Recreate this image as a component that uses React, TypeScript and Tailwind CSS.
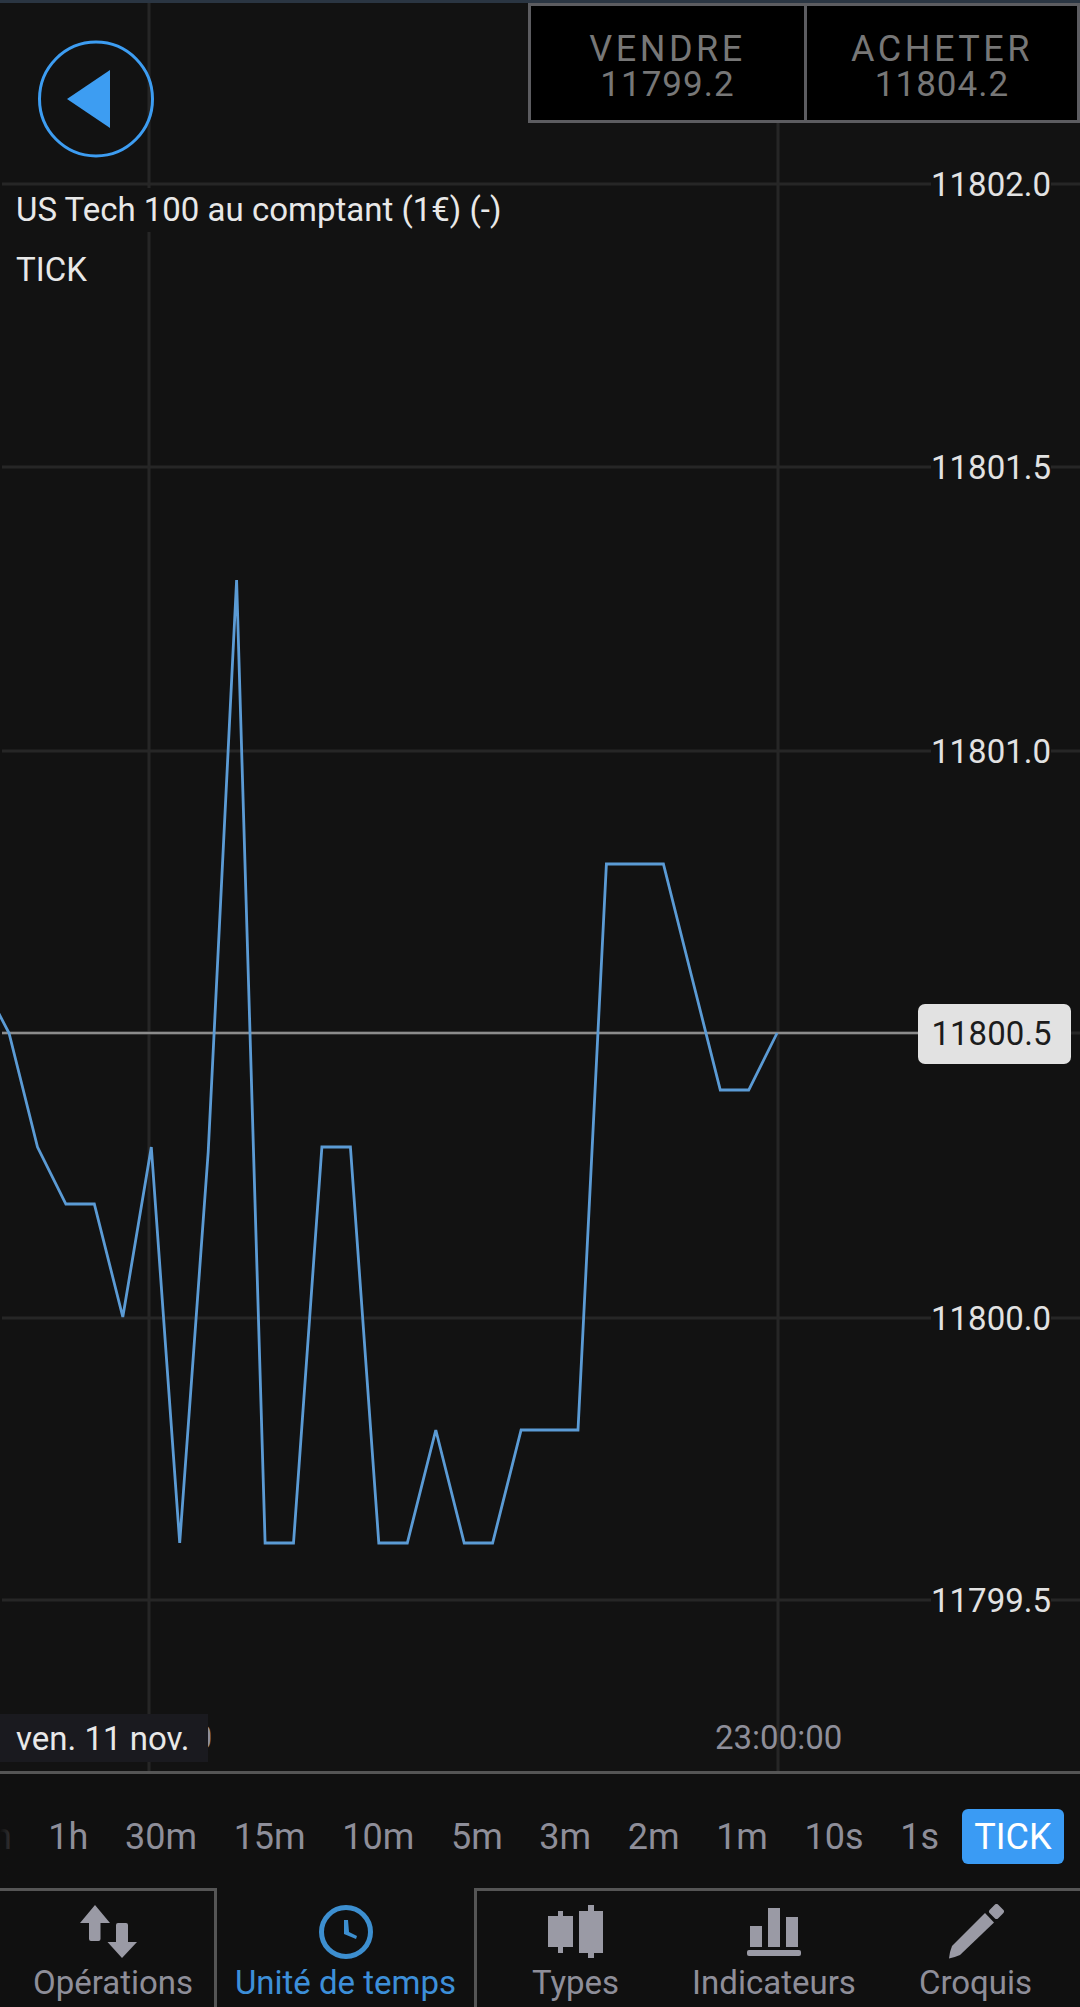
import React from "react";

const font = { fontFamily: "Roboto, sans-serif" };

// x positions step by one tick, y comes straight from the chart
const tick = [
  1147, 1204, 1204, 1317, 1147, 1543, 1152, 580, 1543, 1543, 1147, 1147, 1543, 1543, 1430,
  1543, 1543, 1430, 1430, 1430, 864, 864, 864, 977, 1090, 1090, 1033,
];
const linePoints =
  "-2,1012 9,1033 " + tick.map((y, i) => `${(9 + 28.45 * (i + 1)).toFixed(1)},${y}`).join(" ");

const gridY = [184, 467, 751, 1033, 1318, 1600];
const prices = [
  { label: "11802.0", y: 184 },
  { label: "11801.5", y: 467 },
  { label: "11801.0", y: 751 },
  { label: "11800.0", y: 1318 },
  { label: "11799.5", y: 1600 },
];
const frames = ["2h", "1h", "30m", "15m", "10m", "5m", "3m", "2m", "1m", "10s", "1s"];

const QuoteButton = ({ label, price, className }: { label: string; price: string; className: string }) => (
  <div className={`flex flex-col items-center justify-center bg-black pt-[7px] text-[#777] ${className}`}>
    <span className="text-[36px] leading-[35px] tracking-[3.5px]">{label}</span>
    <span className="text-[35px] leading-[35px] tracking-[1px]">{price}</span>
  </div>
);

const TabLabel = ({ children, active }: { children: string; active?: boolean }) => (
  <span className={`mt-[3px] text-[33px] leading-[42px] ${active ? "text-[#3d8fd9]" : "text-[#8e8e99]"}`}>
    {children}
  </span>
);

export default function App() {
  return (
    <div className="flex h-[2007px] w-[1080px] flex-col overflow-hidden bg-[#121212]" style={font}>
      <div className="h-[3px] bg-[#2a3542]" />

      {/* chart area: labels and lines are placed on the chart canvas */}
      <div className="relative h-[1768px]">
        <svg className="absolute left-0 top-[-3px]" width="1080" height="1771">
          {gridY.map((y) => (
            <line key={y} x1="2" x2="1080" y1={y} y2={y} stroke="#262626" strokeWidth="3" />
          ))}
          <line x1="149" x2="149" y1="3" y2="1771" stroke="#262626" strokeWidth="3" />
          <line x1="778" x2="778" y1="3" y2="1771" stroke="#262626" strokeWidth="3" />
          <line x1="2" x2="918" y1="1033" y2="1033" stroke="#8c8c8c" strokeWidth="2.5" />
          <polyline points={linePoints} fill="none" stroke="#5b9bd5" strokeWidth="2.8" strokeLinejoin="miter" />
        </svg>

        {prices.map((p) => (
          <span
            key={p.label}
            className="absolute right-[29px] bg-[#121212] text-[33px] leading-[40px] text-[#e2e2e2]"
            style={{ top: p.y - 22 }}
          >
            {p.label}
          </span>
        ))}
        <span className="absolute left-[918px] top-[1001px] flex h-[60px] w-[153px] items-center justify-center rounded-[7px] bg-[#e2e2e2] pr-[6px] text-[33px] text-[#1c1c1c]">
          11800.5
        </span>

        <div className="absolute left-[528px] top-0 flex h-[120px] w-[552px] border-[3px] border-[#5c5c60]">
          <QuoteButton label="VENDRE" price="11799.2" className="w-[276px] border-r-[3px] border-[#5c5c60]" />
          <QuoteButton label="ACHETER" price="11804.2" className="flex-1" />
        </div>

        <svg className="absolute left-[36px] top-[35px]" width="120" height="122" viewBox="36 38 120 122">
          <ellipse cx="96" cy="99" rx="56.5" ry="57" fill="none" stroke="#3d9df2" strokeWidth="3" />
          <path d="M67 99 L110 70 V128 Z" fill="#3d9df2" />
        </svg>

        <span className="absolute left-[16px] top-[185px] bg-[#121212] text-[33px] leading-[44px] text-[#e8e8e8]">
          US Tech 100 au comptant (1€) (-)
        </span>
        <span className="absolute left-[16px] top-[245px] text-[33px] leading-[44px] text-[#e8e8e8]">TICK</span>

        <span className="absolute left-[85px] top-[1715px] text-[33px] leading-[40px] text-[#8e8e99]">22:00:00</span>
        <span className="absolute left-[715px] top-[1715px] text-[33px] leading-[40px] text-[#8e8e99]">23:00:00</span>
        <span className="absolute left-0 top-[1711px] flex h-[48px] w-[208px] items-center bg-[#1a1a1f] pl-[16px] pt-[2px] text-[33px] text-[#e8e8e8]">
          ven. 11 nov.
        </span>
      </div>

      {/* time frames */}
      <div className="relative flex h-[117px] items-center justify-end gap-[36.6px] overflow-hidden border-t-[3px] border-[#555] bg-[#101010] pr-[16px] pt-[11px] text-[36px] text-[#8e8e99]">
        {frames.map((f) => (
          <span key={f} className="shrink-0">
            {f}
          </span>
        ))}
        <span className="-ml-[13.6px] flex h-[55px] w-[102px] shrink-0 items-center justify-center rounded-[6px] bg-[#3a9bf4] text-white">
          TICK
        </span>
        <div className="absolute left-0 top-0 h-full w-[40px] bg-gradient-to-r from-[#101010] to-transparent" />
      </div>

      {/* bottom tabs */}
      <div className="flex flex-1 bg-[#101010]">
        <div className="flex w-[217px] flex-col items-center border-r-[3px] border-t-[3px] border-[#555] pl-[12px] pt-[14px]">
          <svg className="-ml-[8px]" width="58" height="54" viewBox="80 1905 58 54">
            <path d="M95 1905 L110 1923 H100.5 V1939 a2 2 0 0 1 -2 2 H91 a2 2 0 0 1 -2 -2 V1923 H80 Z" fill="#9a9aa5" />
            <path d="M122 1958 L137 1942 H128 V1925 a2 2 0 0 0 -2 -2 H118 a2 2 0 0 0 -2 2 V1942 H107.5 Z" fill="#9a9aa5" />
          </svg>
          <TabLabel>Opérations</TabLabel>
        </div>
        <div className="flex w-[257px] flex-col items-center pt-[17px]">
          <svg width="54" height="54" viewBox="319 1905 54 54">
            <circle cx="346" cy="1932" r="24.5" fill="none" stroke="#3d8fd0" strokeWidth="5" />
            <path d="M344 1920 L348 1920 L349 1932 L357 1936 L356 1939 L344 1934 Z" fill="#3d8fd0" />
          </svg>
          <TabLabel active>Unité de temps</TabLabel>
        </div>
        <div className="flex flex-1 border-l-[3px] border-t-[3px] border-[#555] pt-[14px]">
          <div className="flex w-[197px] flex-col items-center">
            <svg width="56" height="54" viewBox="547 1905 56 54">
              <path d="M557 1911 h5 v5 h10 v31 h-10 v6 h-5 v-6 h-10 v-31 h10 Z" fill="#9a9aa5" />
              <path d="M587 1905 h6 v6 h9 v42 h-9 v5 h-6 v-5 h-9 v-42 h9 Z" fill="#9a9aa5" />
            </svg>
            <TabLabel>Types</TabLabel>
          </div>
          <div className="flex w-[200px] flex-col items-center">
            <svg width="54" height="54" viewBox="748 1905 54 54">
              <rect x="751" y="1926" width="12" height="21" fill="#9a9aa5" />
              <rect x="769" y="1908" width="12" height="39" fill="#9a9aa5" />
              <rect x="787" y="1917" width="12" height="30" fill="#9a9aa5" />
              <rect x="748" y="1950" width="54" height="6" rx="2" fill="#9a9aa5" />
            </svg>
            <TabLabel>Indicateurs</TabLabel>
          </div>
          <div className="flex flex-1 flex-col items-center pr-[3px]">
            <svg className="-mt-[1px]" width="56" height="55" viewBox="948 1904 56 55">
              <path d="M985 1913 L994 1922.5 L960 1955 Q955 1957 949 1958.5 Q949.5 1952 952 1946 Z" fill="#9a9aa5" />
              <rect x="990.5" y="1905.5" width="12" height="12" rx="2.5" transform="rotate(45 996.5 1911.5)" fill="#9a9aa5" />
            </svg>
            <TabLabel>Croquis</TabLabel>
          </div>
        </div>
      </div>
    </div>
  );
}
